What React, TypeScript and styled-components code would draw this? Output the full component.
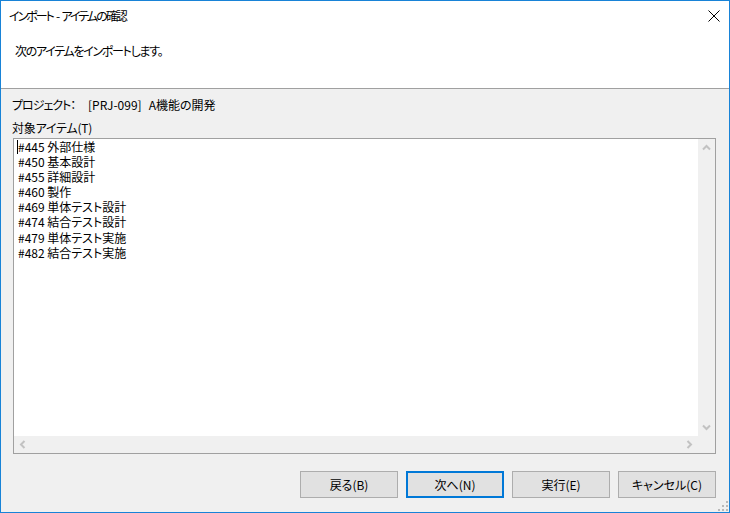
import React from 'react';
import styled, { createGlobalStyle } from 'styled-components';

const GlobalStyle = createGlobalStyle`
  html, body {
    margin: 0;
    padding: 0;
    background: #f0f0f0;
  }
  * {
    box-sizing: border-box;
  }
`;

const FONT = `"Noto Sans CJK JP", "Noto Sans", sans-serif`;

const Window = styled.div`
  position: relative;
  width: 730px;
  height: 513px;
  border: 1px solid #1883d7;
  background: #f0f0f0;
  display: flex;
  flex-direction: column;
  font-family: ${FONT};
  font-size: 12px;
  font-feature-settings: "palt";
  color: #000;
`;

const Header = styled.div`
  height: 88px;
  background: #fff;
  border-bottom: 1px solid #a0a0a0;
  display: flex;
  flex-direction: column;
`;

const TitleBar = styled.div`
  display: flex;
  align-items: center;
  justify-content: space-between;
  height: 30px;
  padding: 0 9px 0 8px;
`;

const Title = styled.span`
  line-height: 15px;
  margin-top: -2px;
  letter-spacing: -2px;
  word-spacing: 2.5px;
`;

const CloseButton = styled.button`
  border: none;
  background: transparent;
  padding: 0;
  width: 12px;
  height: 12px;
  display: flex;
  margin-top: -1px;
`;

const Lead = styled.p`
  margin: 12px 0 0 14px;
  line-height: 15px;
  letter-spacing: -1.3px;
`;

const Body = styled.div`
  flex: 1;
  display: flex;
  flex-direction: column;
  padding: 7px 13px 14px 11px;
`;

const ProjectRow = styled.div`
  display: flex;
  line-height: 15px;
  margin-top: 1px;
  white-space: pre;
`;

const ProjectKey = styled.span`
  width: 76px;
  letter-spacing: -1px;
`;

const ProjectName = styled.span`
  margin-left: 7px;
`;

const Label = styled.div`
  line-height: 15px;
  margin-top: 8px;
  letter-spacing: -0.2px;
`;

const ListBox = styled.div`
  margin: 3px 0 0 1px;
  height: 316px;
  border: 1px solid #a0a0a0;
  background: #fff;
  display: grid;
  grid-template-columns: 1fr 17px;
  grid-template-rows: 1fr 17px;
`;

const ListText = styled.div`
  position: relative;
  padding: 0 0 0 4px;
  line-height: 15.1px;
  white-space: pre;
`;

const Caret = styled.span`
  position: absolute;
  left: 3px;
  top: 1px;
  width: 1px;
  height: 14px;
  background: #000;
`;

const ScrollTrack = styled.div<{ $vertical?: boolean }>`
  background: #f0f0f0;
  display: flex;
  flex-direction: ${p => (p.$vertical ? 'column' : 'row')};
  justify-content: space-between;
  align-items: center;
`;

const ArrowCell = styled.div`
  width: 17px;
  height: 17px;
  display: flex;
  align-items: center;
  justify-content: center;
`;

const Corner = styled.div`
  background: #f0f0f0;
`;

const Buttons = styled.div`
  margin-top: auto;
  display: flex;
  justify-content: flex-end;
  gap: 8px;
`;

const Button = styled.button<{ $default?: boolean }>`
  width: 98px;
  height: 27px;
  font-family: ${FONT};
  font-size: 12px;
  font-feature-settings: "palt";
  color: #000;
  background: #e1e1e1;
  border: ${p => (p.$default ? '2px solid #0078d7' : '1px solid #adadad')};
  padding: 0;
  line-height: 15px;
`;

const Grip = styled.svg`
  position: absolute;
  right: 1px;
  bottom: 1px;
`;

const Chevron = ({ dir }: { dir: 'up' | 'down' | 'left' | 'right' }) => {
  const rot = { up: 0, right: 90, down: 180, left: 270 }[dir];
  return (
    <svg width="9" height="9" viewBox="0 0 9 9" style={{ transform: `rotate(${rot}deg)` }}>
      <path d="M1 6.5 L4.5 3 L8 6.5" fill="none" stroke="#c2c2c2" strokeWidth="2" />
    </svg>
  );
};

const items = [
  '#445 外部仕様',
  '#450 基本設計',
  '#455 詳細設計',
  '#460 製作',
  '#469 単体テスト設計',
  '#474 結合テスト設計',
  '#479 単体テスト実施',
  '#482 結合テスト実施',
];

const App = () => (
  <>
    <GlobalStyle />
    <Window>
      <Header>
        <TitleBar>
          <Title>インポート - アイテムの確認</Title>
          <CloseButton aria-label="閉じる">
            <svg width="12" height="12" viewBox="0 0 12 12">
              <path d="M0.5 0.5 L11.5 11.5 M11.5 0.5 L0.5 11.5" stroke="#000" strokeWidth="1" />
            </svg>
          </CloseButton>
        </TitleBar>
        <Lead>次のアイテムをインポートします。</Lead>
      </Header>
      <Body>
        <ProjectRow>
          <ProjectKey>プロジェクト：</ProjectKey>
          <span>[PRJ-099]</span>
          <ProjectName>A機能の開発</ProjectName>
        </ProjectRow>
        <Label>対象アイテム(T)</Label>
        <ListBox>
          <ListText>
            <Caret />
            {items.join('\n')}
          </ListText>
          <ScrollTrack $vertical>
            <ArrowCell><Chevron dir="up" /></ArrowCell>
            <ArrowCell><Chevron dir="down" /></ArrowCell>
          </ScrollTrack>
          <ScrollTrack>
            <ArrowCell><Chevron dir="left" /></ArrowCell>
            <ArrowCell><Chevron dir="right" /></ArrowCell>
          </ScrollTrack>
          <Corner />
        </ListBox>
        <Buttons>
          <Button>戻る(B)</Button>
          <Button $default>次へ(N)</Button>
          <Button>実行(E)</Button>
          <Button>キャンセル(C)</Button>
        </Buttons>
      </Body>
      <Grip width="10" height="10" viewBox="0 0 10 10">
        {[[8, 0], [8, 4], [4, 4], [8, 8], [4, 8], [0, 8]].map(([x, y]) => (
          <rect key={`${x}-${y}`} x={x} y={y} width="2" height="2" fill="#b8b8b8" />
        ))}
      </Grip>
    </Window>
  </>
);

export default App;
